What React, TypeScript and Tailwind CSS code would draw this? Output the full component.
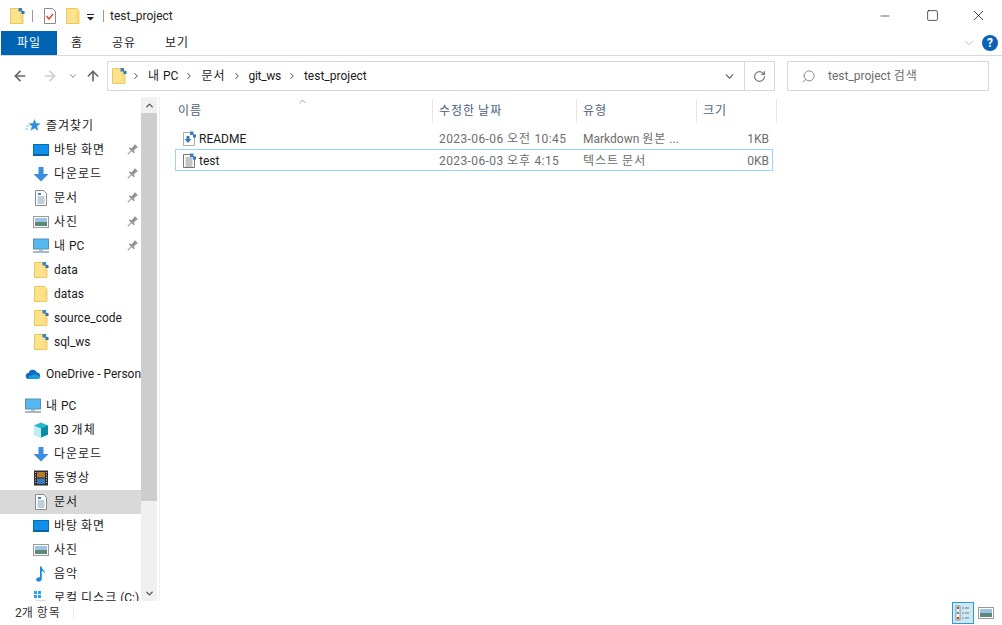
import { ChevronDown, ChevronUp, ChevronRight, RotateCw, Search, X, Minus, Square, ArrowLeft, ArrowRight, ArrowUp } from "lucide-react";

// Hangul runs are 1px a glyph wider in the screenshot's font
function Ko({ text }: { text: string }) {
  return (
    <span className="whitespace-pre">
      {text.split(/([가-힣]+)/).map((part, i) =>
        /[가-힣]/.test(part) ? (
          <span key={i} className="tracking-[1px]">
            {part}
          </span>
        ) : (
          <span key={i}>{part}</span>
        ),
      )}
    </span>
  );
}

function Folder({ pinned = false }: { pinned?: boolean }) {
  return (
    <svg width="16" height="16" viewBox="0 0 16 16" className="shrink-0">
      <path d="M1.500.500h10.500l2 2.500v12.500H1.500z" fill="#fde28c" stroke="#e9c95f" />
      <path d="M12 3v9.500h2" fill="none" stroke="#f0d476" />
      {pinned && (
        <>
          <rect x="9.500" y="0" width="3.500" height="3.500" fill="#3b7fc4" />
          <rect x="12.500" y="3" width="3" height="3" fill="#2f74bd" />
        </>
      )}
    </svg>
  );
}

function Desktop() {
  return (
    <svg width="16" height="16" viewBox="0 0 16 16" className="shrink-0">
      <rect x="0.500" y="2.500" width="15" height="11" fill="#0f8fe6" stroke="#0a6cb4" />
      <rect x="1" y="12" width="14" height="1.500" fill="#0a5c9c" />
    </svg>
  );
}

function Download() {
  return (
    <svg width="16" height="16" viewBox="0 0 16 16" className="shrink-0">
      <path d="M5.500 1h5v7h5L8 15.500.500 8h5z" fill="#3a8ee0" />
    </svg>
  );
}

function Doc() {
  return (
    <svg width="16" height="16" viewBox="0 0 16 16" className="shrink-0">
      <path d="M2.500.500h8l3 3v12h-11z" fill="#fff" stroke="#8a8a8a" />
      <path d="M5 3h3v2H5z" fill="#3b87c9" />
      <path d="M4.500 7h7M4.500 9h7M4.500 11h7M4.500 13h7" stroke="#7b9fb8" />
    </svg>
  );
}

function Picture() {
  return (
    <svg width="16" height="16" viewBox="0 0 16 16" className="shrink-0">
      <rect x="0.500" y="2.500" width="15" height="11" fill="#fff" stroke="#9b9b9b" />
      <rect x="2" y="4" width="12" height="4" fill="#9cc3e2" />
      <rect x="2" y="8" width="12" height="4" fill="#5d8a78" />
    </svg>
  );
}

function Monitor() {
  return (
    <svg width="16" height="16" viewBox="0 0 16 16" className="shrink-0">
      <rect x="0.500" y="1" width="15" height="10" fill="#55b8f2" stroke="#5a8fb0" />
      <rect x="6" y="11" width="4" height="2" fill="#a9b8c2" />
      <rect x="0" y="13" width="16" height="2" fill="#a9b8c2" />
    </svg>
  );
}

function Pin() {
  return (
    <svg width="12" height="12" viewBox="0 0 12 12">
      <g transform="rotate(45 6 6)" fill="#8c8c8c">
        <rect x="4" y="0" width="4" height="1.500" />
        <rect x="4.500" y="1.500" width="3" height="4" />
        <rect x="2.500" y="5.500" width="7" height="1.500" />
        <rect x="5.500" y="7" width="1" height="5" />
      </g>
    </svg>
  );
}

function Cube() {
  return (
    <svg width="16" height="16" viewBox="0 0 16 16" className="shrink-0">
      <path d="M8 .500l7 3v9l-7 3-7-3v-9z" fill="#2bb5c9" />
      <path d="M1 3.500l7 3v9l-7-3z" fill="#bfeef2" />
      <path d="M15 3.500l-7 3v9l7-3z" fill="#0c8aa6" />
    </svg>
  );
}

function Film() {
  return (
    <svg width="16" height="16" viewBox="0 0 16 16" className="shrink-0">
      <rect x="1" y="0.500" width="14" height="15" fill="#2d2d2d" />
      <rect x="4" y="2" width="8" height="5.500" fill="#b5782e" />
      <rect x="4" y="8.500" width="8" height="5.500" fill="#3a78b8" />
      <path d="M2.500 2v12M13.500 2v12" stroke="#c9c9c9" strokeDasharray="1 1.500" />
    </svg>
  );
}

function Music() {
  return (
    <svg width="16" height="16" viewBox="0 0 16 16" className="shrink-0">
      <path d="M7 .500h1.500c.3 3 4 3.600 3.300 7.500-.4-2-1.900-3-3-3.200V13c0 1.700-1.700 2.600-3.300 2.600S3.200 14.800 3.200 13.400c0-1.500 1.900-2.600 3.800-2.100z" fill="#1e88e0" />
    </svg>
  );
}

function Drive() {
  return (
    <svg width="16" height="16" viewBox="0 0 16 16" className="shrink-0">
      <rect x="1" y="1" width="3" height="3" fill="#22a7e8" />
      <rect x="5" y="1" width="3" height="3" fill="#22a7e8" />
      <rect x="1" y="5" width="3" height="3" fill="#22a7e8" />
      <rect x="5" y="5" width="3" height="3" fill="#22a7e8" />
      <path d="M3 10h9l3 3v2H1v-2z" fill="#d8dde0" />
    </svg>
  );
}

function Star() {
  return (
    <svg width="16" height="16" viewBox="0 0 16 16" className="shrink-0">
      <path d="M9.500 1l1.600 4.300 4.400.2-3.400 2.800 1.200 4.400-3.800-2.500-3.800 2.500 1.200-4.400-3.400-2.800 4.400-.2z" fill="#2f8fdc" />
      <path d="M1 8h3M0 11h3" stroke="#8cc4ee" />
    </svg>
  );
}

function Cloud() {
  return (
    <svg width="16" height="16" viewBox="0 0 16 16" className="shrink-0">
      <path d="M4 13a3 3 0 0 1-.5-6A4.500 4.500 0 0 1 12 6.500 3.300 3.300 0 0 1 12.500 13z" fill="#0f6cbd" />
      <path d="M4 13h8.500a3 3 0 0 0 3-2.600L10 8l-6.500 2.500z" fill="#1d9be0" />
    </svg>
  );
}

function NavRow({ icon, label, pin, active, indent = true }: { icon: React.ReactNode; label: string; pin?: boolean; active?: boolean; indent?: boolean }) {
  return (
    <div className={`flex h-6 shrink-0 items-center ${active ? "bg-[#d9d9d9]" : ""} ${indent ? "pl-[33px]" : "pl-[25px]"}`}>
      {icon}
      <span className="ml-[5px] whitespace-nowrap">
        <Ko text={label} />
      </span>
      {pin && (
        <span className="absolute left-[126px] flex">
          <Pin />
        </span>
      )}
    </div>
  );
}

function FileRow({ icon, name, date, type, size, selected }: { icon: React.ReactNode; name: string; date: string; type: string; size: string; selected?: boolean }) {
  return (
    <div className={`flex h-[22px] w-[598px] items-center border pt-[2px] ${selected ? "border-[#99d1ff]" : "border-transparent"}`}>
      <div className="flex w-[256px] items-center pl-[5px]">
        {icon}
        <span className="ml-[2px]">{name}</span>
      </div>
      <span className="w-[144px] pl-[7px] tracking-[0.4px] text-[#6d6d6d]">
        <Ko text={date} />
      </span>
      <span className="w-[120px] whitespace-nowrap pl-[7px] text-[#6d6d6d]">
        <Ko text={type} />
      </span>
      <span className="flex-1 pr-[3px] text-right text-[#6d6d6d]">{size}</span>
    </div>
  );
}

function HeaderCell({ label, width }: { label: string; width: string }) {
  return (
    <div className={`flex h-[24px] items-center border-r border-[#e5e5e5] pl-[6px] text-[#4c607a] ${width}`}>
      <Ko text={label} />
    </div>
  );
}

function Crumb({ label, className = "" }: { label: string; className?: string }) {
  return (
    <>
      <ChevronRight size={10} strokeWidth={2.500} className="ml-[6px] mr-[7px] text-[#666]" />
      <span className={className}>
        <Ko text={label} />
      </span>
    </>
  );
}

export default function App() {
  return (
    <div className="flex h-[625px] w-[1002px] flex-col overflow-hidden bg-white font-['Roboto','Noto_Sans_CJK_KR',sans-serif] text-[12px] text-[#1a1a1a]">
      {/* title bar */}
      <div className="flex h-[31px] shrink-0 items-center">
        <div className="ml-[9px] flex items-center">
          <Folder pinned />
          <div className="ml-[7px] h-[12px] w-px bg-[#9a9a9a]" />
          <svg width="14" height="16" viewBox="0 0 14 16" className="ml-[10px]">
            <path d="M1.500.500h8l3 3v12h-11z" fill="#fff" stroke="#8a8a8a" />
            <path d="M3.500 8l2.500 3 4-5" fill="none" stroke="#d9552c" strokeWidth="1.500" />
          </svg>
          <div className="ml-[8px]">
            <Folder />
          </div>
          <svg width="8" height="8" viewBox="0 0 8 8" className="ml-[6px] mt-[2px]">
            <path d="M0 1h7v1H0zM0 4h7L3.500 7.500z" fill="#222" />
          </svg>
          <div className="ml-[8px] h-[12px] w-px bg-[#9a9a9a]" />
          <span className="ml-[6px] text-[#222]">test_project</span>
        </div>
        <div className="ml-auto flex items-center">
          <Minus size={14} strokeWidth={1} className="text-black" />
          <Square size={13} strokeWidth={1.200} className="ml-[34px] text-black" />
          <X size={17} strokeWidth={1} className="ml-[31px] mr-[15px] text-black" />
        </div>
      </div>

      {/* ribbon tabs */}
      <div className="flex h-[25px] shrink-0 items-stretch border-b border-[#d9d9d9] pl-px">
        <div className="flex w-[56px] items-center justify-center bg-[#0063b1] text-white">
          <Ko text="파일" />
        </div>
        <div className="ml-[14px] flex w-[12px] items-center justify-center whitespace-nowrap">
          <Ko text="홈" />
        </div>
        <div className="ml-[29px] flex w-[24px] items-center justify-center whitespace-nowrap">
          <Ko text="공유" />
        </div>
        <div className="ml-[29px] flex w-[24px] items-center justify-center whitespace-nowrap">
          <Ko text="보기" />
        </div>
        <div className="ml-auto flex items-center pr-[4px]">
          <ChevronDown size={14} strokeWidth={1.200} className="text-[#a6a6a6]" />
          <div className="ml-[6px] flex h-[16px] w-[16px] items-center justify-center rounded-full bg-[#0b62b5] text-[12px] font-bold text-white">?</div>
        </div>
      </div>

      {/* address row */}
      <div className="flex h-[41px] shrink-0 items-center pb-[1px]">
        <div className="flex w-[107px] items-center pl-[12px]">
          <ArrowLeft size={16} strokeWidth={2.500} className="text-[#666]" />
          <ArrowRight size={16} strokeWidth={2.500} className="ml-[14px] text-[#d0d0d0]" />
          <ChevronDown size={10} strokeWidth={2.500} className="ml-[10px] text-[#999]" />
          <ArrowUp size={16} strokeWidth={2.500} className="ml-[7px] text-[#666]" />
        </div>
        <div className="flex h-[30px] w-[668px] items-center border border-[#d9d9d9]">
          <div className="-mr-[2px] ml-[3px]">
            <Folder pinned />
          </div>
          <Crumb label="내 PC" />
          <Crumb label="문서" />
          <Crumb label="git_ws" className="tracking-[-0.3px]" />
          <Crumb label="test_project" />
          <div className="ml-auto flex h-full items-center">
            <ChevronDown size={13} strokeWidth={2.500} className="mr-[8px] text-[#666]" />
            <div className="flex h-full w-[30px] items-center justify-center border-l border-[#d9d9d9]">
              <RotateCw size={13} strokeWidth={2.200} className="text-[#777]" />
            </div>
          </div>
        </div>
        <div className="ml-[12px] flex h-[30px] w-[202px] items-center border border-[#d9d9d9] pl-[13px] text-[#6d6d6d]">
          <Search size={15} strokeWidth={1.500} className="-scale-x-100 text-[#888]" />
          <span className="ml-[12px]">
            <Ko text="test_project 검색" />
          </span>
        </div>
      </div>

      {/* body */}
      <div className="flex h-[504px] shrink-0">
        <div className="relative flex w-[141px] shrink-0 flex-col overflow-hidden pt-[17px]">
          <NavRow indent={false} icon={<Star />} label="즐겨찾기" />
          <NavRow icon={<Desktop />} label="바탕 화면" pin />
          <NavRow icon={<Download />} label="다운로드" pin />
          <NavRow icon={<Doc />} label="문서" pin />
          <NavRow icon={<Picture />} label="사진" pin />
          <NavRow icon={<Monitor />} label="내 PC" pin />
          <NavRow icon={<Folder pinned />} label="data" />
          <NavRow icon={<Folder />} label="datas" />
          <NavRow icon={<Folder pinned />} label="source_code" />
          <NavRow icon={<Folder pinned />} label="sql_ws" />
          <div className="mt-[8px]">
            <NavRow indent={false} icon={<Cloud />} label="OneDrive - Personal" />
          </div>
          <div className="mt-[8px]">
            <NavRow indent={false} icon={<Monitor />} label="내 PC" />
          </div>
          <NavRow icon={<Cube />} label="3D 개체" />
          <NavRow icon={<Download />} label="다운로드" />
          <NavRow icon={<Film />} label="동영상" />
          <NavRow active icon={<Doc />} label="문서" />
          <NavRow icon={<Desktop />} label="바탕 화면" />
          <NavRow icon={<Picture />} label="사진" />
          <NavRow icon={<Music />} label="음악" />
          <NavRow icon={<Drive />} label="로컬 디스크 (C:)" />
        </div>

        {/* sidebar scrollbar */}
        <div className="flex w-[16px] shrink-0 flex-col bg-[#f0f0f0]">
          <div className="flex h-[16px] items-center justify-center">
            <ChevronUp size={11} strokeWidth={3} className="text-[#555]" />
          </div>
          <div className="h-[388px] w-full bg-[#cdcdcd]" />
          <div className="mt-auto flex h-[16px] items-center justify-center">
            <ChevronDown size={11} strokeWidth={3} className="text-[#555]" />
          </div>
        </div>
        <div className="ml-[2px] w-px shrink-0 bg-[#f0f0f0]" />

        {/* file list */}
        <div className="relative flex-1 pl-[12px] pt-[2px]">
          <ChevronUp size={11} strokeWidth={1.500} className="absolute left-[137px] top-[-1px] text-[#777]" />
          <div className="flex">
            <HeaderCell label="이름" width="w-[261px]" />
            <HeaderCell label="수정한 날짜" width="w-[144px]" />
            <HeaderCell label="유형" width="w-[120px]" />
            <HeaderCell label="크기" width="w-[80px]" />
          </div>
          <div className="ml-[3px] mt-[4px] flex flex-col">
            <FileRow
              icon={
                <svg width="16" height="16" viewBox="0 0 16 16" className="shrink-0">
                  <path d="M2.500 1.500h8l3 3v10h-11z" fill="#fff" stroke="#9fb0bb" />
                  <path d="M5.500 5h3v3h2l-3.500 4L3.500 8h2z" fill="#3f79a8" />
                  <rect x="9" y="0.500" width="3.500" height="3.500" fill="#3b7fc4" />
                  <rect x="12" y="3.500" width="3" height="3" fill="#2f74bd" />
                </svg>
              }
              name="README"
              date="2023-06-06 오전 10:45"
              type="Markdown 원본 ..."
              size="1KB"
            />
            <FileRow
              selected
              icon={
                <svg width="16" height="16" viewBox="0 0 16 16" className="shrink-0">
                  <path d="M2.500 1.500h8l3 3v10h-11z" fill="#fff" stroke="#777" />
                  <path d="M4.500 5h7M4.500 7h7M4.500 9h7M4.500 11h7M4.500 13h7" stroke="#8a8a8a" />
                  <rect x="9" y="0.500" width="3.500" height="3.500" fill="#3b7fc4" />
                  <rect x="12" y="3.500" width="3" height="3" fill="#2f74bd" />
                </svg>
              }
              name="test"
              date="2023-06-03 오후 4:15"
              type="텍스트 문서"
              size="0KB"
            />
          </div>
        </div>
      </div>

      {/* status bar */}
      <div className="flex flex-1 items-center pl-[15px] pr-[8px]">
        <span className="text-[#333]">
          <Ko text="2개 항목" />
        </span>
        <div className="ml-[12px] h-[14px] w-px bg-[#eeeeee]" />
        <div className="ml-auto flex items-center">
          <div className="flex h-[22px] w-[22px] items-center justify-center border border-[#2b9ad6] bg-[#cce8f7]">
            <svg width="16" height="16" viewBox="0 0 16 16">
              <rect x="1" y="1" width="4" height="14" fill="#fff" stroke="#888" />
              <path d="M7 3h2M10 3h4M7 8h2M10 8h4M7 13h2M10 13h4" stroke="#777" />
              <rect x="2" y="2" width="2" height="2" fill="#666" />
              <rect x="2" y="7" width="2" height="2" fill="#3a8ee0" />
              <rect x="2" y="12" width="2" height="2" fill="#c0392b" />
            </svg>
          </div>
          <div className="ml-[4px] flex h-[22px] w-[16px] items-center justify-center">
            <Picture />
          </div>
        </div>
      </div>
    </div>
  );
}
